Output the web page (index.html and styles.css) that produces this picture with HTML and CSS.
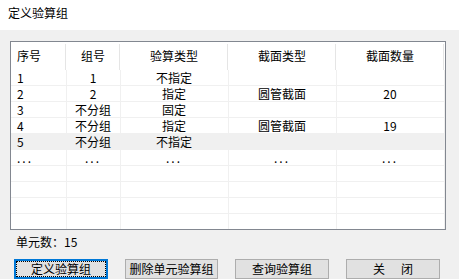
FILE: index.html
```html
<!DOCTYPE html>
<html lang="zh-CN">
<head>
    <meta charset="UTF-8">
    <title>定义验算组</title>
    <link rel="stylesheet" href="styles.css">
</head>
<body>
    <div class="titlebar">定义验算组</div>
    <div class="content">
        <div class="grid-box">
            <table class="grid">
                <colgroup>
                    <col class="c1"><col class="c2"><col class="c3"><col class="c4"><col class="c5">
                </colgroup>
                <tr class="head">
                    <th class="left">序号</th>
                    <th>组号</th>
                    <th>验算类型</th>
                    <th>截面类型</th>
                    <th>截面数量</th>
                </tr>
                <tr><td class="left">1</td><td>1</td><td>不指定</td><td></td><td></td></tr>
                <tr><td class="left">2</td><td>2</td><td>指定</td><td>圆管截面</td><td>20</td></tr>
                <tr><td class="left">3</td><td>不分组</td><td>固定</td><td></td><td></td></tr>
                <tr><td class="left">4</td><td>不分组</td><td>指定</td><td>圆管截面</td><td>19</td></tr>
                <tr class="selected"><td class="left">5</td><td>不分组</td><td>不指定</td><td></td><td></td></tr>
                <tr class="dots"><td class="left">...</td><td>...</td><td>...</td><td>...</td><td>...</td></tr>
                <tr><td></td><td></td><td></td><td></td><td></td></tr>
                <tr><td></td><td></td><td></td><td></td><td></td></tr>
                <tr><td></td><td></td><td></td><td></td><td></td></tr>
                <tr><td></td><td></td><td></td><td></td><td></td></tr>
            </table>
        </div>
        <div class="count">单元数：15</div>
        <div class="buttons">
            <button class="btn focused">定义验算组</button>
            <button class="btn">删除单元验算组</button>
            <button class="btn">查询验算组</button>
            <button class="btn">关&nbsp;&nbsp;&nbsp;&nbsp;&nbsp;&nbsp;闭</button>
        </div>
    </div>
</body>
</html>
```

FILE: styles.css
```css
html, body {
    height: 279px;
    overflow: hidden;
}
body {
    margin: 0;
    background-color: #f0f0f0;
    font-family: "Noto Sans CJK SC", "Liberation Sans", sans-serif;
    font-size: 12px;
    color: #000;
}
.titlebar {
    height: 30px;
    line-height: 26px;
    padding-left: 8px;
    background-color: #fff;
}
.content {
    padding: 11px 0 0 10px;
}
.grid-box {
    width: 434px;
    height: 187px;
    border: 1px solid #828790;
    background-color: #fff;
    overflow: hidden;
}
.grid {
    border-collapse: collapse;
    table-layout: fixed;
    width: 433px;
}
.c1 { width: 55px; }
.c2 { width: 54px; }
.c3 { width: 108px; }
.c4 { width: 108px; }
.c5 { width: 108px; }
th, td {
    padding: 0;
    text-align: center;
    font-weight: normal;
    white-space: nowrap;
}
.grid th {
    height: 26px;
    line-height: 28px;
    position: relative;
}
.grid th::after {
    content: "";
    position: absolute;
    right: 0;
    top: 2px;
    bottom: 0;
    border-right: 1px solid #e5e5e5;
}
.grid td {
    height: 15px;
    line-height: 15px;
    border-right: 1px solid #f0f0f0;
    border-bottom: 1px solid #f0f0f0;
}
.grid .left {
    text-align: left;
    padding-left: 6px;
}
.grid .selected td {
    background-color: #f0f0f0;
}
.grid .dots td {
    letter-spacing: 2px;
}
.count {
    height: 16px;
    line-height: 16px;
    margin: 4px 0 0 6px;
}
.buttons {
    display: flex;
    gap: 17px;
    margin: 9px 0 0 4px;
}
.btn {
    box-sizing: border-box;
    height: 20px;
    width: 94px;
    padding: 0;
    font-family: inherit;
    font-size: 12px;
    line-height: 16px;
    white-space: nowrap;
    background-color: #e1e1e1;
    border: 1px solid #adadad;
    color: #000;
}
.btn:nth-child(2) {
    width: 93px;
}
.btn.focused {
    border: 2px solid #0078d7;
    outline: 1px dotted #000;
    outline-offset: -3px;
}
```
